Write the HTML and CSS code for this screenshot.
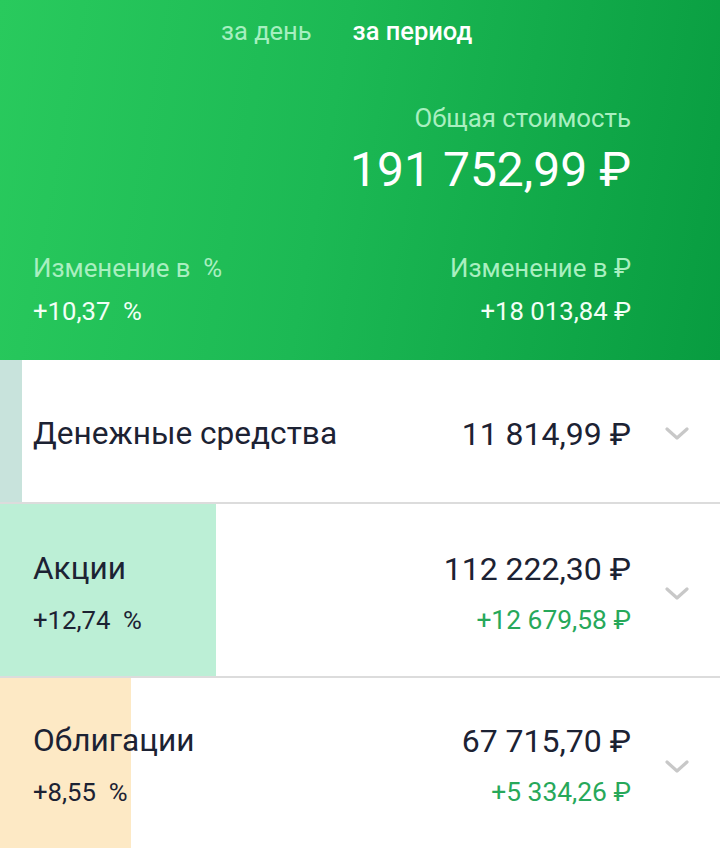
FILE: index.html
```html
<!DOCTYPE html>
<html lang="ru">
<head>
<meta charset="utf-8">
<title>Портфель</title>
<link rel="stylesheet" href="styles.css">
</head>
<body>
<div class="page">
  <header class="summary">
    <nav class="tabs">
      <span class="tab">за день</span>
      <span class="tab tab-active">за период</span>
    </nav>
    <div class="total">
      <div class="label">Общая стоимость</div>
      <div class="total-value">191 752,99 ₽</div>
    </div>
    <div class="changes">
      <div class="change">
        <div class="label">Изменение в&nbsp; %</div>
        <div class="change-value">+10,37&nbsp; %</div>
      </div>
      <div class="change change-right">
        <div class="label">Изменение в ₽</div>
        <div class="change-value">+18 013,84 ₽</div>
      </div>
    </div>
  </header>

  <section class="assets">
    <div class="asset asset-cash">
      <div class="asset-bar bar-cash" style="width:22px"></div>
      <div class="asset-left">
        <div class="asset-name">Денежные средства</div>
      </div>
      <div class="asset-right">
        <div class="asset-amount">11 814,99 ₽</div>
      </div>
      <div class="chevron">
        <svg viewBox="0 0 24 14" width="24" height="14"><path d="M2 2 L12 11 L22 2" fill="none" stroke="#c8c8c8" stroke-width="3.2" stroke-linecap="round" stroke-linejoin="round"/></svg>
      </div>
    </div>

    <div class="asset asset-stocks">
      <div class="asset-bar bar-stocks" style="width:216px"></div>
      <div class="asset-left">
        <div class="asset-name">Акции</div>
        <div class="asset-pct">+12,74&nbsp; %</div>
      </div>
      <div class="asset-right">
        <div class="asset-amount">112 222,30 ₽</div>
        <div class="asset-gain">+12 679,58 ₽</div>
      </div>
      <div class="chevron">
        <svg viewBox="0 0 24 14" width="24" height="14"><path d="M2 2 L12 11 L22 2" fill="none" stroke="#c8c8c8" stroke-width="3.2" stroke-linecap="round" stroke-linejoin="round"/></svg>
      </div>
    </div>

    <div class="asset asset-last">
      <div class="asset-bar bar-bonds" style="width:131px"></div>
      <div class="asset-left">
        <div class="asset-name">Облигации</div>
        <div class="asset-pct">+8,55&nbsp; %</div>
      </div>
      <div class="asset-right">
        <div class="asset-amount">67 715,70 ₽</div>
        <div class="asset-gain">+5 334,26 ₽</div>
      </div>
      <div class="chevron">
        <svg viewBox="0 0 24 14" width="24" height="14"><path d="M2 2 L12 11 L22 2" fill="none" stroke="#c8c8c8" stroke-width="3.2" stroke-linecap="round" stroke-linejoin="round"/></svg>
      </div>
    </div>
  </section>
</div>
</body>
</html>
```

FILE: styles.css
```css
* { box-sizing: border-box; }

html, body {
  margin: 0;
  padding: 0;
  background: #ffffff;
}

body {
  font-family: Roboto, "Noto Sans", "Liberation Sans", sans-serif;
  width: 720px;
  height: 848px;
  overflow: hidden;
}

.page {
  display: flex;
  flex-direction: column;
}

.summary {
  height: 360px;
  background: linear-gradient(100deg, #29ca5d 0%, #1cb954 45%, #089c40 100%);
  padding: 15px 89px 34px 33px;
  display: flex;
  flex-direction: column;
}

.tabs {
  display: flex;
  gap: 41px;
  padding-left: 188px;
  line-height: 32px;
  font-size: 25.5px;
}

.tab {
  color: #a6efc0;
}

.tab-active {
  color: #ffffff;
  font-weight: 500;
}

.total {
  margin-top: 56px;
  display: flex;
  flex-direction: column;
  align-items: flex-end;
}

.label {
  color: #a9efc0;
  font-size: 25.8px;
  line-height: 30px;
}

.total-value {
  margin-top: 10px;
  color: #ffffff;
  font-size: 48px;
  line-height: 54px;
}

.changes {
  margin-top: 56px;
  display: flex;
  justify-content: space-between;
}

.change {
  display: flex;
  flex-direction: column;
  gap: 13px;
}

.change-right {
  align-items: flex-end;
}

.change-value {
  color: #f2fff6;
  font-size: 25.7px;
  line-height: 30px;
}

.assets {
  display: flex;
  flex-direction: column;
}

.asset {
  position: relative;
  display: flex;
  align-items: center;
  height: 174px;
  padding-left: 33px;
  border-bottom: 2px solid #dcdcdc;
  background: #ffffff;
}

.asset-cash {
  height: 144px;
  padding-top: 5px;
}

.asset-stocks {
  padding-top: 8px;
}

.asset-last {
  padding-top: 5px;
}

.asset-bar {
  position: absolute;
  left: 0;
  top: 0;
  bottom: 0;
}

.bar-cash { background: #c8e3dc; }
.bar-stocks { background: #bcefd6; }
.bar-bonds { background: #fde9c5; }

.asset-left,
.asset-right,
.chevron {
  position: relative;
}

.asset-left {
  flex: 1;
  display: flex;
  flex-direction: column;
  gap: 15px;
}

.asset-right {
  display: flex;
  flex-direction: column;
  align-items: flex-end;
  gap: 15px;
}

.asset-name {
  color: #1c2233;
  font-size: 31.6px;
  line-height: 36px;
}

.asset-pct {
  color: #1c2233;
  font-size: 25.7px;
  line-height: 36px;
}

.asset-amount {
  color: #1c2233;
  font-size: 32px;
  line-height: 36px;
}

.asset-gain {
  color: #27a85a;
  font-size: 26.4px;
  line-height: 36px;
}

.chevron {
  width: 24px;
  height: 14px;
  margin-left: 34px;
  margin-right: 31px;
  display: flex;
}
```
